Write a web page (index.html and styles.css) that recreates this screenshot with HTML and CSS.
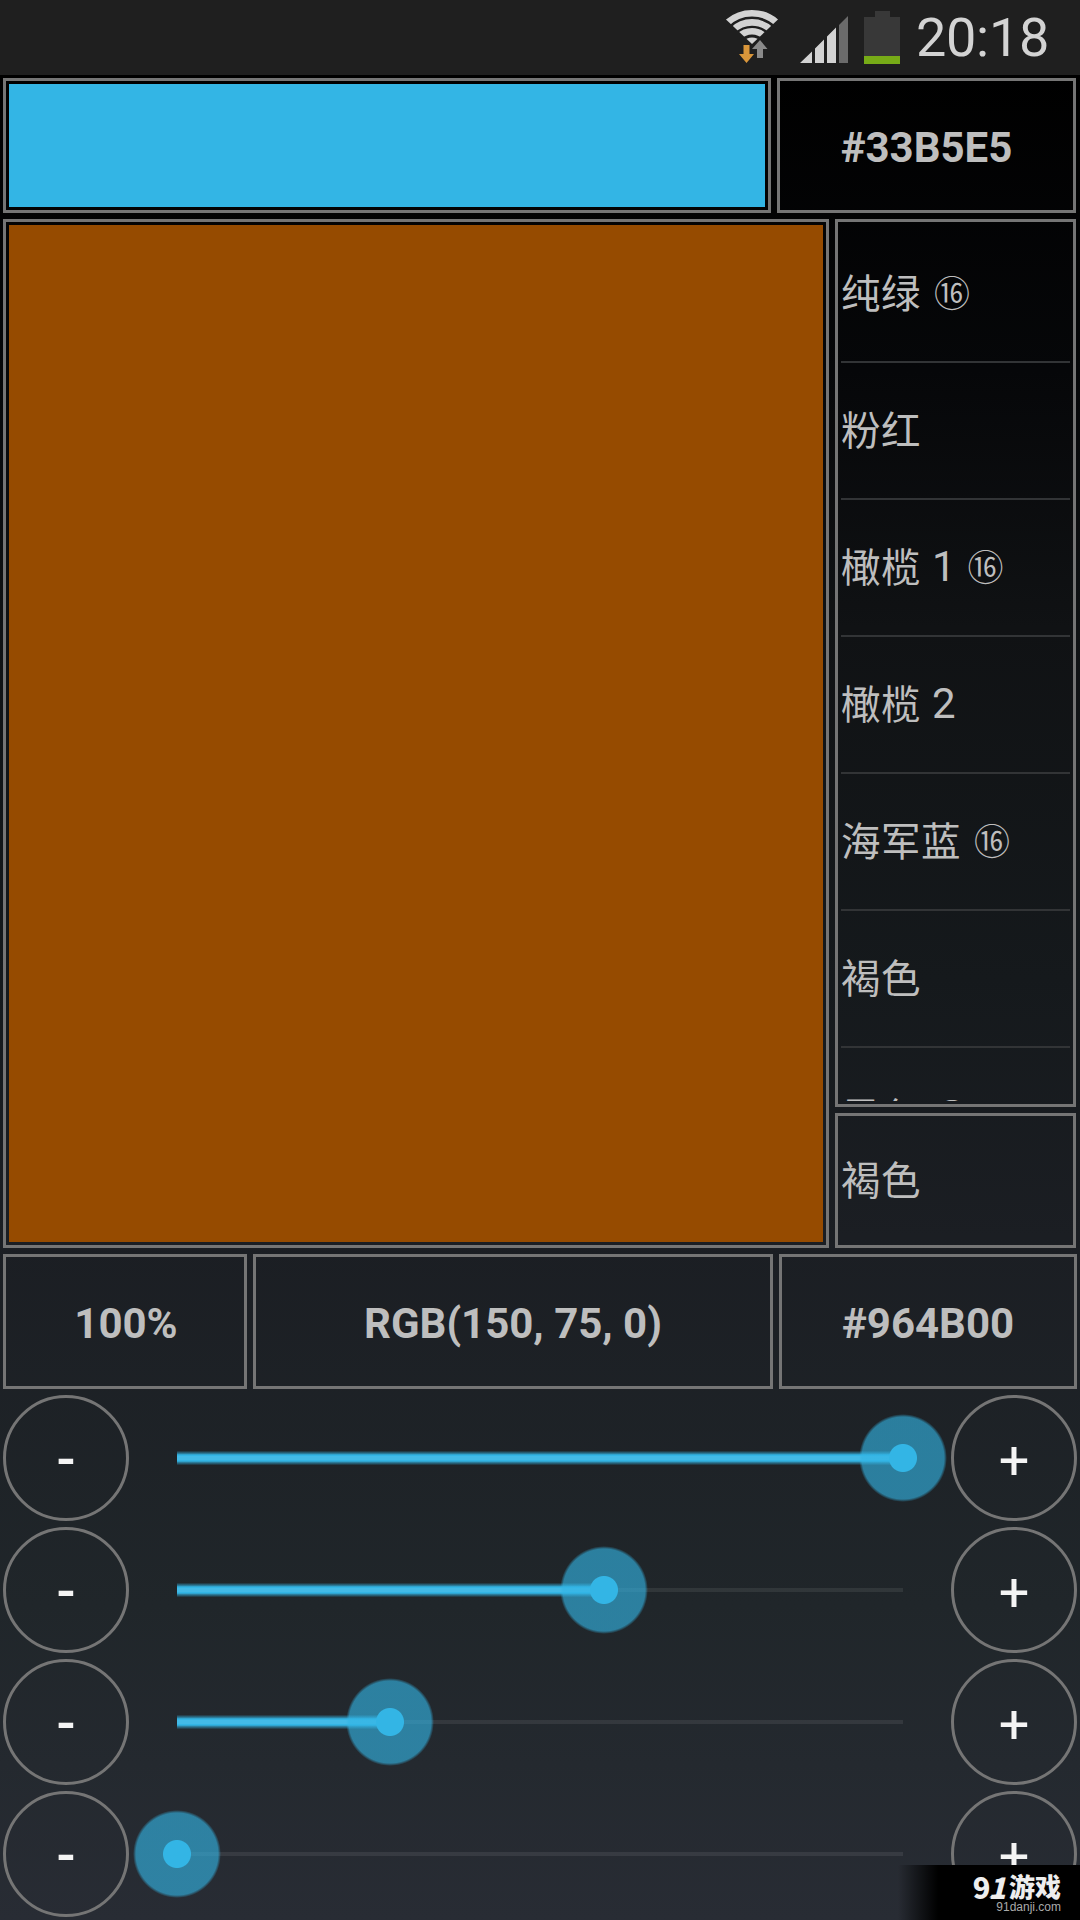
FILE: index.html
```html
<!DOCTYPE html>
<html lang="zh-CN">
<head>
<meta charset="utf-8">
<title>RGB</title>
<link rel="stylesheet" href="styles.css">
</head>
<body>
<header class="status">
  <svg class="wifi" width="54" height="58" viewBox="725 8 54 58">
    <defs><clipPath id="fan"><path d="M726 0V19.5L752 44L778 19.5V0Z"/></clipPath></defs>
    <g clip-path="url(#fan)" fill="none" stroke="#d3d3d3">
      <circle cx="752" cy="50" r="36.8" stroke-width="6.6"/>
      <circle cx="752" cy="50" r="27.6" stroke-width="6.6"/>
      <circle cx="752" cy="50" r="18.7" stroke-width="6.4"/>
      <circle cx="752" cy="50" r="9" stroke-width="7"/>
    </g>
    <path d="M743.5 45h6v9h4.500L746.500 63L739 54h4.500Z" fill="#d9963a"/>
    <path d="M757 58h6V49h4.500L760 40L752 49h5Z" fill="#8a8a8a"/>
  </svg>
  <svg class="signal" width="48" height="47" viewBox="0 0 48 47">
    <path d="M0 47L12 35.500V47ZM15 32.500L24 23.500V47H15ZM27 20.500L36 11.500V47H27Z" fill="#d3d3d3"/>
    <path d="M39 9L48 0V47H39Z" fill="#6b6b6b"/>
  </svg>
  <svg class="battery" width="36" height="53" viewBox="0 0 36 53">
    <path d="M11 0H26V6H36V45H0V6H11Z" fill="#383838"/>
    <path d="M0 45H36V53H0Z" fill="#77ab17"/>
  </svg>
  <span class="clock">20:18</span>
</header>
<main class="app">
  <section class="row top">
    <div class="box swatch"><div class="fill blue"></div></div>
    <div class="box label hex">#33B5E5</div>
  </section>
  <section class="row middle">
    <div class="box swatch"><div class="fill brown"></div></div>
    <div class="side">
      <div class="box list"><ul class="names">
        <li>纯绿 <i class="web">⑯</i></li>
        <li>粉红</li>
        <li>橄榄 <b class="num">1</b> <i class="web">⑯</i></li>
        <li>橄榄 <b class="num">2</b></li>
        <li>海军蓝 <i class="web">⑯</i></li>
        <li>褐色</li>
        <li>黑色 <i class="web">⑯</i></li>
      </ul></div>
      <div class="box current">褐色</div>
    </div>
  </section>
  <section class="row values">
    <div class="box label percent">100%</div>
    <div class="box label rgb">RGB(150, 75, 0)</div>
    <div class="box label code">#964B00</div>
  </section>
  <section class="sliders">
    <div class="slider"><span class="btn minus">-</span><div class="track"><div class="bar" style="width:100%"></div><div class="thumb" style="left:100%"></div></div><span class="btn plus">+</span></div>
    <div class="slider"><span class="btn minus">-</span><div class="track"><div class="bar" style="width:58.8%"></div><div class="thumb" style="left:58.8%"></div></div><span class="btn plus">+</span></div>
    <div class="slider"><span class="btn minus">-</span><div class="track"><div class="bar" style="width:29.4%"></div><div class="thumb" style="left:29.4%"></div></div><span class="btn plus">+</span></div>
    <div class="slider"><span class="btn minus">-</span><div class="track"><div class="bar" style="width:0%"></div><div class="thumb" style="left:0%"></div></div><span class="btn plus">+</span></div>
  </section>
</main>
<aside class="badge">
  <div class="brand">
    <span class="mark">9<i>1</i><svg class="swoosh" width="15" height="6" viewBox="0 0 17 6"><path d="M0 4.500Q8 -1 17 2.500Q15 6 8 5.500Q4 5 0 4.500Z" fill="#eee"/></svg></span>
    <span class="game">游戏</span>
  </div>
  <div class="site">91danji.com</div>
</aside>
</body>
</html>
```
FILE: styles.css
```css
* { box-sizing: border-box; }
html { background: #000; }
body {
  margin: 0;
  width: 1080px;
  height: 1920px;
  overflow: hidden;
  position: relative;
  display: flex;
  flex-direction: column;
  font-family: Roboto, "Noto Sans CJK SC", sans-serif;
  color: #bebebe;
}
.status {
  height: 75px;
  flex: none;
  background: #1f1f1f;
  display: flex;
  align-items: flex-start;
  padding-left: 725px;
  color: #d3d3d3;
}
.wifi { margin-top: 8px; }
.signal { margin: 16px 0 0 21px; }
.battery { margin: 11px 0 0 16px; }
.clock {
  margin: 5px 0 0 16px;
  font-size: 54px;
  line-height: 66px;
  letter-spacing: -0.3px;
  white-space: nowrap;
}
.app {
  flex: 1;
  min-height: 0;
  padding: 3px 3px 0;
  display: flex;
  flex-direction: column;
  gap: 6px;
  background: linear-gradient(#000 0%, #060709 16%, #101214 30%, #15191c 49%, #1b1e23 63%, #20262a 83%, #282c34 100%);
}
.row { display: flex; gap: 6px; flex: none; }
.box { border: 3px solid #757575; }
.swatch { padding: 3px; flex: 1; }
.fill { height: 100%; }
.blue { background: #33b5e5; }
.brown { background: #964b00; }
.label {
  display: flex;
  align-items: center;
  justify-content: center;
  font-size: 42px;
  font-weight: 700;
  padding-top: 4px;
  white-space: nowrap;
}
.top { height: 135px; padding-right: 1px; }
.hex { width: 299px; }
.middle { height: 1029px; padding-right: 1px; }
.side { width: 241px; display: flex; flex-direction: column; gap: 6px; }
.list { height: 888px; padding: 3px; }
.names {
  margin: 0;
  padding: 1px 0 0;
  list-style: none;
  height: 876px;
  overflow: hidden;
}
.names li, .current {
  display: flex;
  align-items: center;
  font-family: "Noto Sans CJK SC", sans-serif;
  font-size: 39.5px;
  letter-spacing: 0.5px;
  line-height: 60px;
  white-space: nowrap;
  padding-bottom: 6px;
}
.names li { height: 137px; border-bottom: 2px solid #323436; padding-bottom: 5px; }
.names li:last-child { padding-bottom: 2px; }
.web {
  font-style: normal;
  font-size: 36px;
  font-weight: 350;
  margin-left: 13px;
}
.num {
  font-family: Roboto, sans-serif;
  font-weight: 400;
  font-size: 42px;
  margin: 4px 0 0 11px;
  letter-spacing: 0;
}
.num + .web { margin-left: 12px; }
.current { flex: 1; padding-left: 3px; }
.values { height: 135px; }
.percent { width: 244px; padding-left: 2px; }
.rgb { width: 520px; }
.code { width: 298px; }
.sliders { display: flex; flex-direction: column; gap: 6px; }
.slider { height: 126px; display: flex; justify-content: space-between; align-items: center; }
.btn {
  width: 126px;
  height: 126px;
  border: 3px solid #757575;
  border-radius: 50%;
  display: flex;
  align-items: center;
  justify-content: center;
  color: #f4f4f4;
}
.minus { font-size: 56px; font-weight: 500; padding-top: 2px; }
.plus { font-size: 54px; font-weight: 400; padding-top: 5px; }
.track { position: relative; width: 726px; height: 126px; display: flex; align-items: center; }
.track::before {
  content: "";
  position: absolute;
  left: 0;
  right: 0;
  top: 61px;
  height: 4px;
  background: #ffffff14;
}
.bar {
  height: 14px;
  background: linear-gradient(#33b5e510, #33b5e5aa 20%, #33b5e5 28%, #33b5e5 72%, #33b5e5aa 80%, #33b5e510);
}
.thumb {
  position: absolute;
  top: 19px;
  width: 88px;
  height: 88px;
  margin-left: -44px;
  border-radius: 50%;
  background: radial-gradient(circle, #33b5e5 13.500px, #33b5e5a0 14.500px, #33b5e5a0 41px, #33b5e500 44px);
}
.badge {
  position: absolute;
  right: 0;
  bottom: 0;
  width: 182px;
  height: 55px;
  padding: 7px 19px 0 0;
  background: linear-gradient(90deg, #0000, #000 40px);
  display: flex;
  flex-direction: column;
  align-items: flex-end;
  color: #eee;
}
.brand { display: flex; align-items: center; gap: 5px; height: 28px; font-family: "Noto Sans CJK SC", sans-serif; font-weight: 900; line-height: 28px; }
.mark { position: relative; font-size: 29px; letter-spacing: -2px; }
.swoosh { position: absolute; right: 0; bottom: 1px; }
.game { font-size: 26px; margin-top: -1px; }
.site { font: 12px/14px "Liberation Sans", sans-serif; color: #aaa; }
```
